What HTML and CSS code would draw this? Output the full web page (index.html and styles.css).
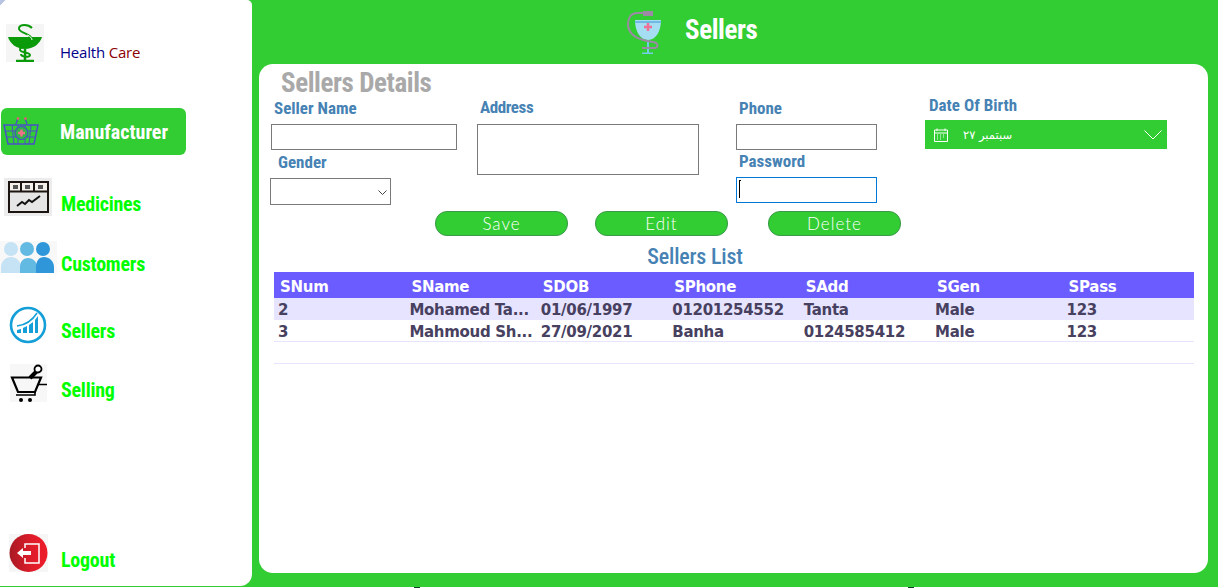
FILE: index.html
```html
<!DOCTYPE html>
<html lang="en">
<head>
<meta charset="utf-8">
<title>Sellers</title>
<link rel="stylesheet" href="styles.css">
</head>
<body>
<div class="app">
  <aside class="sidebar">
    <div class="brand">
      <svg class="brand-icon" width="38" height="38" viewBox="0 0 38 38">
        <rect width="38" height="38" fill="#f5f5f5"/>
        <path d="M2 13H36C34 20 27 25 19 25S4 20 2 13Z" fill="#0a9a0a"/>
        <path d="M19 25V36M10 37H28" stroke="#0a9a0a" stroke-width="2.500" fill="none"/>
        <path d="M26 4C22 0 14 0 13 4C12 9 24 9 26 15C27 21 15 22 14 25C13 29 24 28 24 31C24 34 15 33 15 30" stroke="#0a9a0a" stroke-width="2" fill="none"/>
        <path d="M21 11C24 12 26 14 26 16" stroke="#fff" stroke-width="1" fill="none"/>
      </svg>
      <p class="brand-name"><span class="brand-health">Health</span> <span class="brand-care">Care</span></p>
    </div>
    <nav class="nav">
      <a class="nav-item nav-active">
        <svg class="nav-icon" width="36" height="30" viewBox="0 0 36 30">
          <path d="M13 7L15 1M24 7L22 1" stroke="#4a50c8" stroke-width="1.300" fill="none"/>
          <circle cx="15" cy="1.500" r="1.300" fill="#ef5a78"/><circle cx="22.500" cy="1.500" r="1.300" fill="#ef5a78"/>
          <path d="M1 8H35L31 27H5Z" fill="none" stroke="#4a50c8" stroke-width="1.500"/>
          <path d="M2 14H34M3 20H33M9 8L11 27M15 8V27M22 8V27M28 8L26 27" stroke="#4a50c8" stroke-width="1" fill="none"/>
          <circle cx="18.500" cy="16" r="6.500" fill="#2fb34a" stroke="#4a50c8" stroke-width="1.200"/>
          <path d="M18.500 12.500V19.500M15 16H22" stroke="#f4708a" stroke-width="2.400"/>
        </svg>
        <span class="nav-label">Manufacturer</span>
      </a>
      <a class="nav-item nav-medicines">
        <svg class="nav-icon" width="48" height="38" viewBox="0 0 48 38">
          <rect width="48" height="38" fill="#ececec"/>
          <rect x="5" y="4" width="39" height="30" fill="#e6e6e6" stroke="#1c1410" stroke-width="2"/>
          <rect x="6" y="5" width="37" height="8" fill="#f4f0ea"/>
          <path d="M5 13.500H44" stroke="#1c1410" stroke-width="2"/>
          <path d="M17 5V13M30 5V13" stroke="#1c1410" stroke-width="2"/>
          <path d="M9 7H14V11H9ZM21 7H26V11H21ZM34 7H39V11H34Z" fill="#555"/>
          <path d="M13 28L18 24L21 26L25 22L28 24L36 18" stroke="#111" stroke-width="2" fill="none"/>
        </svg>
        <span class="nav-label">Medicines</span>
      </a>
      <a class="nav-item nav-customers">
        <svg class="nav-icon" width="57" height="32" viewBox="0 0 57 32">
          <rect width="57" height="32" fill="#f8f8f8"/>
          <circle cx="11" cy="8" r="7" fill="#c6e2f5"/><circle cx="27" cy="8" r="7" fill="#62b9e2"/><circle cx="43" cy="8" r="7" fill="#2f96d9"/>
          <path d="M1 32V26C1 20 6 16 11 16S21 20 21 26V32Z" fill="#c6e2f5"/>
          <path d="M20 32V26C20 20 24 17 28 17S37 20 37 26V32Z" fill="#62b9e2"/>
          <path d="M36 32V26C36 20 39 16 44 16S54 20 54 26V32Z" fill="#2f96d9"/>
        </svg>
        <span class="nav-label">Customers</span>
      </a>
      <a class="nav-item nav-sellers">
        <svg class="nav-icon" width="38" height="38" viewBox="0 0 38 38">
          <circle cx="19" cy="19" r="17" fill="#fff" stroke="#149fd8" stroke-width="2.600"/>
          <path d="M8 24L12 23V27H8ZM14 22L18 20V27H14ZM20 19L24 16V27H20ZM26 14L29 10V27H26Z" fill="#149fd8"/>
          <path d="M8 20C16 19 23 15 28 7" stroke="#149fd8" stroke-width="1.500" fill="none"/>
        </svg>
        <span class="nav-label">Sellers</span>
      </a>
      <a class="nav-item nav-selling">
        <svg class="nav-icon" width="37" height="38" viewBox="0 0 37 38">
          <rect width="37" height="38" fill="#f7f7f7"/>
          <path d="M20 14L27 7" stroke="#000" stroke-width="4"/>
          <circle cx="28" cy="5" r="3.500" fill="#fff" stroke="#000" stroke-width="1.800"/>
          <path d="M2 13.500H31L25 28H8Z" fill="none" stroke="#000" stroke-width="2.200"/>
          <path d="M28 20.500H37M25 28V31H6" stroke="#000" stroke-width="1.600" fill="none"/>
          <circle cx="11" cy="36" r="2" fill="#000"/><circle cx="20" cy="36" r="2" fill="#000"/>
        </svg>
        <span class="nav-label">Selling</span>
      </a>
      <a class="nav-item nav-logout">
        <svg class="nav-icon" width="39" height="38" viewBox="0 0 39 38">
          <defs><linearGradient id="logout-fill" x1="0" x2="1" y1="0" y2="0"><stop offset="0" stop-color="#a81a24"/><stop offset=".6" stop-color="#e01c2a"/><stop offset="1" stop-color="#ee1c2a"/></linearGradient></defs>
          <rect width="39" height="38" fill="#f6f6f6"/>
          <circle cx="19.500" cy="19" r="19" fill="url(#logout-fill)"/>
          <path d="M16 14V10H30V29H16V24" fill="none" stroke="#fff" stroke-width="1.500"/>
          <path d="M8 19L14 14V17H22V21H14V24Z" fill="#fff"/>
        </svg>
        <span class="nav-label">Logout</span>
      </a>
    </nav>
  </aside>
  <main class="main">
    <header class="topbar">
      <svg width="38" height="44" viewBox="0 0 38 44">
        <path d="M8 10H34C34 21 29 30 21 30S8 21 8 10Z" fill="#a5def2"/>
        <path d="M8 12H34" stroke="#6fb9e3" stroke-width="2"/>
        <path d="M21 30V43M15 43.500H26" stroke="#72cde8" stroke-width="2"/>
        <path d="M21 13V21M17 17H25" stroke="#ef6f95" stroke-width="2.500"/>
        <path d="M18 3H10C4 3 1 8 1 14C1 24 10 30 26 32C32 33 32 38 26 38H15" fill="none" stroke="#9c8aa4" stroke-width="2"/>
        <rect x="16" y="1" width="10" height="5" fill="#9c8aa4"/>
      </svg>
      <h1 class="page-title">Sellers</h1>
    </header>
    <section class="panel">
      <h2 class="panel-title">Sellers Details</h2>
      <form class="form">
        <div class="col col-a">
          <label class="field-label label-name">Seller Name</label>
          <input class="box box-name" type="text">
          <label class="field-label label-gender">Gender</label>
          <select class="box box-gender"></select>
        </div>
        <div class="col col-b">
          <label class="field-label label-address">Address</label>
          <textarea class="box box-address"></textarea>
        </div>
        <div class="col col-c">
          <label class="field-label label-phone">Phone</label>
          <input class="box box-short" type="text">
          <label class="field-label label-password">Password</label>
          <div class="focus-wrap"><input class="box box-short box-focus" type="password"><i class="caret"></i></div>
        </div>
        <div class="col col-d">
          <label class="field-label label-dob">Date Of Birth</label>
          <div class="date">
            <svg width="14" height="14" viewBox="0 0 14 14">
              <path d="M.5 2H13.500V13.500H.5ZM.5 5H13.500" fill="none" stroke="#fff"/>
              <path d="M3 .5V3M11 .5V3" stroke="#fff"/>
              <path d="M3 7H5M6 7H8M9 7H11M3 9H5M6 9H8M9 9H11M3 11H5M6 11H8" stroke="#fff" stroke-dasharray="1 1"/>
            </svg>
            <span class="date-text" dir="rtl">سبتمبر ٢٧</span>
            <svg class="date-arrow" width="18" height="10" viewBox="0 0 18 10"><path d="M.5.5L9 9L17.500.5" fill="none" stroke="#fff"/></svg>
          </div>
        </div>
      </form>
      <div class="actions">
        <button class="btn" type="button">Save</button>
        <button class="btn btn-edit" type="button">Edit</button>
        <button class="btn btn-delete" type="button">Delete</button>
      </div>
      <h3 class="list-title">Sellers List</h3>
      <table class="grid">
        <thead><tr><th>SNum</th><th>SName</th><th>SDOB</th><th>SPhone</th><th>SAdd</th><th>SGen</th><th>SPass</th></tr></thead>
        <tbody>
          <tr class="alt"><td>2</td><td>Mohamed Ta...</td><td>01/06/1997</td><td>01201254552</td><td>Tanta</td><td>Male</td><td>123</td></tr>
          <tr class="plain"><td>3</td><td>Mahmoud Sh...</td><td>27/09/2021</td><td>Banha</td><td>0124585412</td><td>Male</td><td>123</td></tr>
          <tr class="empty"><td colspan="7"></td></tr>
        </tbody>
      </table>
    </section>
  </main>
</div>
</body>
</html>
```
FILE: styles.css
```css
* { box-sizing: border-box; }
html, body { margin: 0; height: 588px; overflow: hidden; }
body {
  font-family: "Roboto Condensed", Roboto, "Liberation Sans", sans-serif;
  font-stretch: 75%;
  background: linear-gradient(90deg, #fff 414px, #0d3f22 414px 420px, #fff 420px 908px, #0d3f22 908px 914px, #fff 914px);
}

.app { display: flex; height: 587px; background: #32cd32; }

.sidebar {
  position: relative;
  width: 252px;
  height: 586px;
  flex: none;
  background: #fff;
  border-radius: 0 5px 12px 0;
}
.sidebar::before {
  content: "";
  position: absolute;
  left: 0;
  top: 0;
  width: 6px;
  height: 6px;
  background: linear-gradient(135deg, #b9c4e4 0 45%, transparent 50%);
}

.brand { display: flex; align-items: flex-end; padding: 24px 0 0 6px; height: 108px; }
.brand-icon { align-self: flex-start; }
.brand-name {
  margin: 0 0 46px 16px;
  font: 15px/20px "Open Sans", sans-serif;
  letter-spacing: -.2px;
}
.brand-health { color: #00008b; }
.brand-care { color: #8b0000; }

.nav { display: flex; flex-direction: column; }
.nav-item { display: flex; align-items: flex-end; }
.nav-icon { flex: none; display: block; }
.nav-label {
  font-size: 20px;
  line-height: 24px;
  font-weight: 700;
  letter-spacing: -.25px;
  color: #00ff00;
}
.nav-active {
  align-items: center;
  width: 185px;
  height: 47px;
  margin-left: 1px;
  padding-left: 2px;
  background: #32cd32;
  border-radius: 6px;
}
.nav-active .nav-label { color: #fff; margin-left: 21px; letter-spacing: 0; }
.nav-medicines { margin: 23px 0 0 4px; }
.nav-medicines .nav-label { margin-left: 9px; }
.nav-customers { margin-top: 25px; }
.nav-customers .nav-label { margin: 0 0 -3px 4px; }
.nav-sellers { margin: 33px 0 0 9px; }
.nav-sellers .nav-label { margin: 0 0 1px 14px; }
.nav-selling { margin: 20px 0 0 10px; }
.nav-selling .nav-label { margin-left: 14px; }
.nav-logout { margin: 132px 0 0 9px; }
.nav-logout .nav-label { margin-left: 13px; }

.main { flex: 1; display: flex; flex-direction: column; padding-left: 7px; }
.topbar { height: 64px; display: flex; gap: 20px; padding: 10px 0 0 368px; }
.page-title {
  margin: 3px 0 0;
  font-size: 27px;
  line-height: 34px;
  font-weight: 700;
  letter-spacing: -.4px;
  color: #fff;
}

.panel {
  width: 949px;
  height: 509px;
  padding: 4px 14px 0 11px;
  background: #fff;
  border-radius: 14px;
}
.panel-title {
  margin: 0 0 0 11px;
  height: 28px;
  font-size: 27px;
  line-height: 30px;
  font-weight: 700;
  letter-spacing: -.4px;
  color: #a9a9a9;
}

.form {
  display: grid;
  grid-template-columns: 207px 259px 189px 242px;
  height: 114px;
}
.col { display: flex; flex-direction: column; align-items: flex-start; }
.field-label {
  display: block;
  height: 20px;
  font-size: 17px;
  line-height: 20px;
  font-weight: 700;
  color: #4682b4;
}
.box {
  display: block;
  margin: 0;
  padding: 0;
  background: #fff;
  border: 1px solid #7a7a7a;
  border-radius: 0;
  outline: none;
  resize: none;
}
.label-name { margin: 2px 0 6px 4px; }
.box-name { width: 186px; height: 26px; margin-left: 1px; }
.label-gender { margin: 2px 0 6px 8px; }
.box-gender {
  width: 121px;
  height: 27px;
  appearance: none;
  background: #fff url("data:image/svg+xml,%3Csvg xmlns='http://www.w3.org/2000/svg' width='9' height='5'%3E%3Cpath d='M.5.5L4.500 4.500L8.500.5' fill='none' stroke='%23444'/%3E%3C/svg%3E") no-repeat 107px 11px;
}
.label-address { margin: 1px 0 7px 3px; letter-spacing: -.4px; }
.box-address { width: 222px; height: 51px; }
.label-phone { margin: 2px 0 6px 3px; }
.box-short { width: 141px; height: 26px; }
.label-password { margin: 1px 0 6px 3px; }
.focus-wrap { position: relative; }
.box-focus { border-color: #0078d7; }
.caret {
  position: absolute;
  left: 3px;
  top: 3px;
  width: 1px;
  height: 18px;
  background: #000;
}
.caret::before {
  content: "";
  display: block;
  width: 2px;
  height: 1px;
  background: #000;
}
.label-dob { margin: -1px 0 5px 4px; }
.date {
  display: flex;
  align-items: center;
  width: 242px;
  height: 29px;
  padding: 0 5px 0 9px;
  background: #32cd32;
  color: #fff;
}
.date-text { margin-left: 15px; font: 11.500px/16px "DejaVu Sans", sans-serif; }
.date-arrow { margin-left: auto; }

.actions { display: flex; padding-left: 165px; margin-top: 1px; }
.btn {
  width: 133px;
  height: 25px;
  padding: 0;
  background: #32cd32;
  border: 1px solid #3b9a4a;
  border-radius: 12px;
  color: #fff;
  font: 300 17px/22px Lato, sans-serif;
  letter-spacing: 1px;
}
.btn-edit { margin-left: 27px; }
.btn-delete { margin-left: 40px; }

.list-title {
  margin: 7px 78px 0 4px;
  height: 29px;
  font-size: 22px;
  line-height: 27px;
  font-weight: 500;
  letter-spacing: -.2px;
  text-align: center;
  color: #4682b4;
}

.grid {
  width: 920px;
  margin-left: 4px;
  border-collapse: collapse;
  table-layout: fixed;
  font: 700 15px/16px "DejaVu Sans", sans-serif;
  letter-spacing: -.3px;
  color: #47405f;
}
.grid th {
  height: 26px;
  padding: 4px 0 0 6px;
  background: #6a5cff;
  color: #fff;
  text-align: left;
  font: inherit;
}
.grid td { padding: 2px 0 0 4px; white-space: nowrap; }
.grid .alt { background: #e6e4ff; }
.grid .alt td { height: 22px; }
.grid .plain { border-bottom: 1px solid #e6e4ff; }
.grid .plain td { height: 21px; padding-top: 3px; }
.grid .empty { border-bottom: 1px solid #e6e4ff; }
.grid .empty td { height: 22px; }
```
